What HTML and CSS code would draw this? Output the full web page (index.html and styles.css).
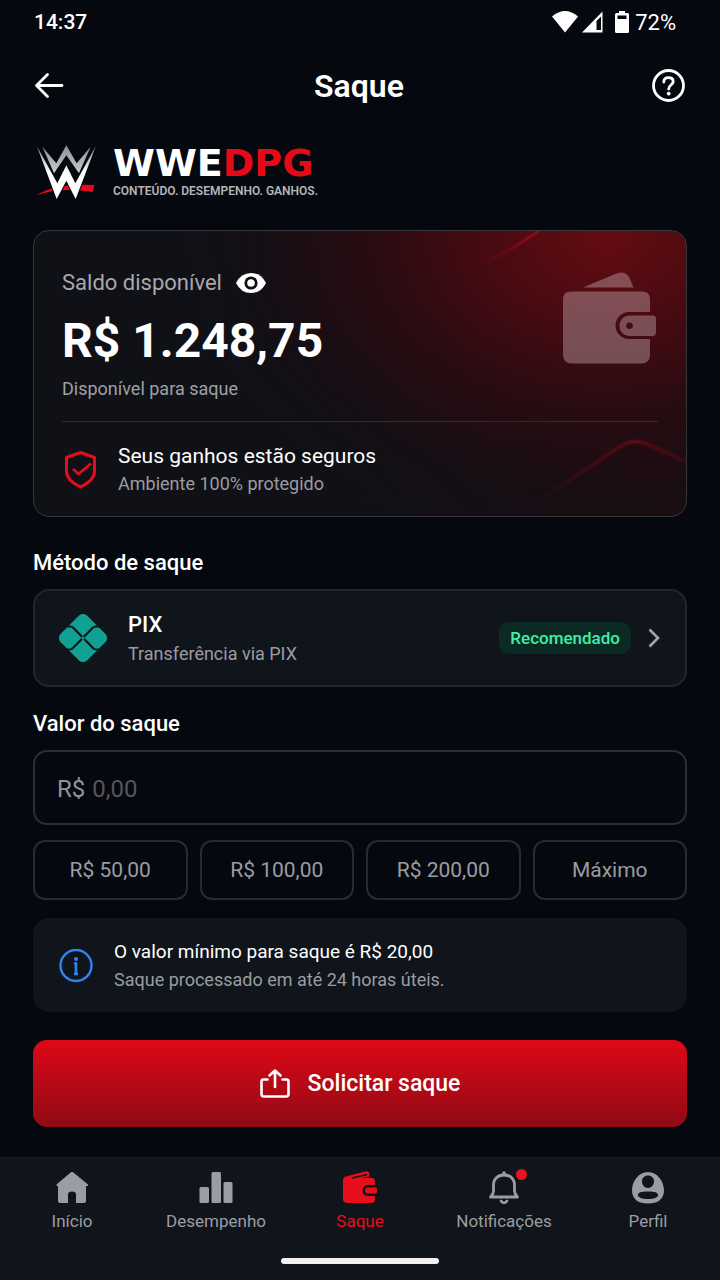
FILE: index.html
```html
<!DOCTYPE html>
<html lang="pt-BR">
<head>
    <meta charset="UTF-8" />
    <meta name="viewport" content="width=device-width, initial-scale=1.0" />
    <title>Saque - WWEDPG</title>
    <link rel="stylesheet" href="styles.css">
</head>
<body>
    <div class="status-bar">
        <span>14:37</span>
        <div class="status-icons">
            <svg width="26" height="22" viewBox="0 0 26 22" fill="#fff"><path d="M0 5.500Q13-5.500 26 5.500L13 21.500Z"/></svg>
            <svg width="21" height="22" viewBox="0 0 21 22"><path d="M20.500 0.500V21.500H0Z" fill="#fff"/><path d="M14.500 10L19 5.500V19H14.500Z" fill="#05080e"/></svg>
            <svg class="battery" width="14" height="22" viewBox="0 0 14 22"><path d="M4 0h6v2h2.500q1.500 0 1.500 1.500v17q0 1.500-1.500 1.500h-11Q0 22 0 20.500v-17Q0 2 1.500 2H4Z" fill="#fff"/><path d="M2.500 4.500h9V8h-9Z" fill="#05080e"/></svg>
            <span class="battery-level">72%</span>
        </div>
    </div>

    <header class="header">
        <button class="icon-btn" type="button" aria-label="Voltar">
            <svg width="32" height="32" viewBox="0 0 32 32" fill="none" stroke="#fff" stroke-width="2.800" stroke-linecap="round" stroke-linejoin="round"><path d="M28 15.500H3M13.500 4.500L2.500 15.500L13.500 26.500"/></svg>
        </button>
        <h1>Saque</h1>
        <button class="icon-btn" type="button" aria-label="Ajuda">
            <svg width="34" height="34" viewBox="0 0 34 34" fill="none" stroke="#fff" stroke-width="2.800"><circle cx="16.500" cy="16.500" r="15"/><path d="M11.800 13Q11.800 8.700 16.500 8.700T21.200 12.700C21.200 15.700 16.700 15.900 16.700 20" stroke-linecap="round"/><circle cx="16.700" cy="24.600" r="1.900" fill="#fff" stroke="none"/></svg>
        </button>
    </header>

    <main class="content">
        <div class="brand">
            <svg width="60" height="54" viewBox="36 45 180 162">
                <defs>
                    <linearGradient id="steel" x1="0" y1="0" x2="0" y2="1">
                        <stop offset="0" stop-color="#8d8f94"/>
                        <stop offset="1" stop-color="#c9cacd"/>
                    </linearGradient>
                    <linearGradient id="silver" x1="0" y1="0" x2="0" y2="1">
                        <stop offset="0" stop-color="#85878c"/>
                        <stop offset="0.5" stop-color="#fff"/>
                    </linearGradient>
                </defs>
                <path d="M38 196Q90 160 211 165L206 186Q110 170 38 196Z" fill="#e30b1b"/>
                <path d="M55 50L97 100L127 46L158 100L200 50L165 130L127 76L90 130Z" fill="url(#steel)"/>
                <path class="brand-w" d="M38 47L100 160L127 106L154 160L216 47L155 207L127 152L98 207Z" fill="url(#silver)"/>
            </svg>
            <div>
                <div class="brand-name">WWE<span>DPG</span></div>
                <div class="brand-tagline">CONTEÚDO. DESEMPENHO. GANHOS.</div>
            </div>
        </div>

        <section class="balance-card">
            <svg class="card-lines" width="327" height="287" viewBox="0 0 327 287" fill="none">
                <defs>
                    <linearGradient id="lineTop" x1="0" y1="1" x2="1" y2="0">
                        <stop offset="0" stop-color="#e3101f" stop-opacity="0"/>
                        <stop offset="1" stop-color="#e3101f" stop-opacity="0.75"/>
                    </linearGradient>
                    <linearGradient id="lineBottom" x1="0" y1="0" x2="1" y2="0">
                        <stop offset="0" stop-color="#c4101c" stop-opacity="0"/>
                        <stop offset="0.650" stop-color="#c4101c" stop-opacity="0.450"/>
                        <stop offset="1" stop-color="#c4101c" stop-opacity="0.200"/>
                    </linearGradient>
                    <filter id="soft"><feGaussianBlur stdDeviation="1"/></filter>
                </defs>
                <path d="M114 36Q145 25 182-2" stroke="url(#lineTop)" stroke-width="2" filter="url(#soft)"/>
                <path d="M170 276L260 216Q273 207 288 213L330 232" stroke="url(#lineBottom)" stroke-width="3" filter="url(#soft)"/>
            </svg>
            <div class="balance">
                <div>
                    <div class="balance-label">
                        <span>Saldo disponível</span>
                        <button class="icon-btn" type="button" aria-label="Ocultar saldo">
                            <svg width="30" height="20" viewBox="0 0 30 20"><path d="M0 10Q5 0 15 0T30 10Q25 20 15 20T0 10Z" fill="#fff"/><circle cx="15" cy="10" r="5.200" fill="#fff" stroke="#120f14" stroke-width="2.800"/></svg>
                        </button>
                    </div>
                    <div class="balance-value">R$ 1.248,75</div>
                    <div class="balance-note">Disponível para saque</div>
                </div>
                <svg class="wallet" width="94" height="92" viewBox="0 0 94 92">
                    <path d="M20 15.500L54 1.200Q62-1.500 66 5L70.500 15.500Z"/>
                    <path d="M8 19.500H79Q87 19.500 87 27.500V40H66A13.500 13.500 0 0 0 66 67H87V83Q87 91.500 78 91.500H9Q0 91.500 0 82.500V27.500Q0 19.500 8 19.500Z"/>
                    <path fill-rule="evenodd" d="M66 43.500H90Q93 43.500 93 47V60Q93 64 89.500 64H66A9.500 10.200 0 0 1 66 43.500ZM66.500 50.500A3.300 3.300 0 1 0 66.500 57.100A3.300 3.300 0 1 0 66.500 50.500Z"/>
                </svg>
            </div>
            <div class="secure">
                <svg width="36" height="38" viewBox="0 0 36 38" fill="none" stroke="#e50d1c" stroke-width="3" stroke-linejoin="round"><path d="M18.500 1.500L32.500 6.500V20Q32.500 29.500 18.500 36Q4.500 29.500 4.500 20V6.500Z"/><path d="M11 18L16.500 23L29 12.500" stroke-width="2.600"/></svg>
                <div>
                    <div class="row-title secure-title">Seus ganhos estão seguros</div>
                    <div class="row-text">Ambiente 100% protegido</div>
                </div>
            </div>
        </section>

        <h2>Método de saque</h2>
        <button class="method" type="button">
            <svg width="48" height="48" viewBox="0 0 48 48">
                <rect x="5.250" y="5.250" width="37.500" height="37.500" rx="6" transform="rotate(45 24 24)" fill="#10a193"/>
                <path d="M8 12.500H11.500Q13 12.500 14.500 14L34 34Q35.500 35.500 37 35.500H40M40 12.500H36.500Q35 12.500 33.500 14L14 34Q12.500 35.500 11 35.500H8" fill="none" stroke="#10141b" stroke-width="2.200"/>
                <circle cx="24" cy="24" r="1.500" fill="#10a193"/>
            </svg>
            <span class="method-text">
                <span class="row-title">PIX</span>
                <span class="row-text">Transferência via PIX</span>
            </span>
            <span class="tag">Recomendado</span>
            <svg width="12" height="20" viewBox="0 0 12 20" fill="none" stroke="#a2a4aa" stroke-width="2.600"><path d="M1.500 1.500L10 10L1.500 18.500"/></svg>
        </button>

        <h2><label for="amount">Valor do saque</label></h2>
        <div class="amount-field">
            <span>R$</span>
            <input id="amount" type="text" inputmode="decimal" placeholder="0,00">
        </div>
        <div class="presets">
            <button type="button">R$ 50,00</button>
            <button type="button">R$ 100,00</button>
            <button type="button">R$ 200,00</button>
            <button type="button">Máximo</button>
        </div>

        <div class="info">
            <svg width="34" height="34" viewBox="0 0 34 34" fill="none" stroke="#2f83f3"><circle cx="17" cy="16.500" r="15.500" stroke-width="2.400"/><path d="M15 14.500H17V24.500M15 25H19" stroke-width="2.600"/><circle cx="17" cy="10" r="2" fill="#2f83f3" stroke="none"/></svg>
            <div>
                <div class="info-title">O valor mínimo para saque é R$ 20,00</div>
                <div class="row-text">Saque processado em até 24 horas úteis.</div>
            </div>
        </div>

        <button class="submit" type="button">
            <svg width="30" height="30" viewBox="0 0 30 30" fill="none" stroke="#fff" stroke-width="2.600" stroke-linecap="round" stroke-linejoin="round"><path d="M7.500 10.500H3.500Q1.500 10.500 1.500 12.500V25Q1.500 27.500 4 27.500H26Q28.500 27.500 28.500 25V12.500Q28.500 10.500 26.500 10.500H22.500M15 18V2M9.500 6.500L15 1.500L20.500 6.500"/></svg>
            Solicitar saque
        </button>
    </main>

    <nav class="bottom-nav">
        <div class="nav-items">
            <a href="#">
                <svg width="34" height="34" viewBox="0 0 34 34" fill="currentColor"><path d="M17 1Q18 1 19 2L33 13.500V15H31V30Q31 32 29 32H21V23.500Q21 20.500 17 20.500T13 23.500V32H5Q3 32 3 30V15H1.500V13.500L15 2Q16 1 17 1Z"/></svg>
                Início
            </a>
            <a href="#">
                <svg width="34" height="34" viewBox="0 0 34 34" fill="currentColor"><rect x="0.500" y="16" width="9.500" height="16" rx="1.500"/><rect x="12.500" y="1" width="9.500" height="31" rx="1.500"/><rect x="24.500" y="11" width="9" height="21" rx="1.500"/></svg>
                Desempenho
            </a>
            <a class="active" href="#" aria-current="page">
                <svg width="34" height="34" viewBox="0 0 34 34" fill="currentColor"><path d="M3 5.500L22 0.500Q25-0.500 26.500 2.500L26 5.500L18 7H28.500Q32 7 32 10.500V14H25A5.500 5.500 0 0 0 25 25H32V29Q32 32 28 32H4.500Q0 32 0 28V9Q0 6.500 3 5.500Z"/><path d="M25 16.500H33Q34 16.500 34 18V21Q34 22.500 32.500 22.500H25A3 3 0 0 1 25 16.500Z"/><path d="M9 7L24 3.500" stroke="#10141b" stroke-width="1.600"/></svg>
                Saque
            </a>
            <a href="#">
                <span class="bell">
                    <svg width="34" height="34" viewBox="0 0 34 34" fill="none" stroke="currentColor" stroke-width="2.800" stroke-linecap="round" stroke-linejoin="round"><path d="M17 4C10 4 6.500 8.500 6.500 14V20Q6.500 23 3.500 26H30.500Q27.500 23 27.500 20V14C27.500 8.500 24 4 17 4Z"/><path d="M17 2V3.500" stroke-width="3.500"/><path d="M14 30Q17 33.800 20 30"/></svg>
                    <span class="dot"></span>
                </span>
                Notificações
            </a>
            <a href="#">
                <svg width="34" height="34" viewBox="0 0 34 34" fill="currentColor"><path fill-rule="evenodd" d="M17 1C26 1 33 10 33 19.500C33 28 27 32.500 17 32.500S1 28 1 19.500C1 10 8 1 17 1ZM17 4.500C13.500 4.500 11 7 11 10.500S13.500 17 17 17S23 14 23 10.500S20.500 4.500 17 4.500ZM17 20.500C10 20.500 7 21.500 7 24S11 28 17 28S27 26.500 27 24S24 20.500 17 20.500Z"/></svg>
                Perfil
            </a>
        </div>
        <div class="home-indicator"></div>
    </nav>
</body>
</html>
```
FILE: styles.css
```css
* {
    box-sizing: border-box;
}

body {
    font-family: Roboto, sans-serif;
    background: #05080e;
    color: #fff;
    margin: 0;
    min-height: 100vh;
    display: flex;
    flex-direction: column;
}

button {
    font: inherit;
    color: inherit;
    cursor: pointer;
}

svg {
    display: block;
    flex-shrink: 0;
}

h1, h2 {
    margin: 0;
}

/* Status bar and header */
.status-bar {
    display: flex;
    justify-content: space-between;
    align-items: center;
    height: 44px;
    padding: 0 44px 0 34px;
    font-size: 21px;
    font-weight: 500;
}

.status-icons {
    display: flex;
    align-items: center;
    gap: 4px;
}

.battery {
    margin: 0 2px 0 8px;
}

.battery-level {
    font-size: 22px;
    font-weight: 400;
}

.header {
    display: flex;
    justify-content: space-between;
    align-items: center;
    height: 84px;
    padding: 0 34px;
}

.header h1 {
    font-size: 32px;
    font-weight: 600;
    line-height: 40px;
}

.icon-btn {
    background: none;
    border: none;
    padding: 0;
}

.content {
    flex: 1;
    padding: 16px 33px 30px;
}

/* Brand */
.brand {
    display: flex;
    align-items: center;
    gap: 17px;
    height: 56px;
    padding-left: 3px;
    margin-bottom: 30px;
}

.brand-w {
    stroke: #05080e;
    stroke-width: 6px;
    paint-order: stroke;
}

.brand-name {
    font-family: "DejaVu Sans", sans-serif;
    font-size: 38px;
    font-weight: 700;
    line-height: 38px;
}

.brand-name span {
    color: #e60a19;
}

.brand-tagline {
    color: #b4b6ba;
    font-size: 12px;
    font-weight: 600;
    line-height: 18px;
}

/* Balance */
.balance-card {
    position: relative;
    overflow: hidden;
    padding: 38px 28px 18px;
    border: 1px solid #36363b;
    border-radius: 16px;
    background: radial-gradient(ellipse 440px 320px at 88% 2%, #650b12 0%, #460b11 28%, #270c11 55%, rgba(24, 13, 18, 0.5) 80%, rgba(15, 16, 22, 0) 100%), linear-gradient(90deg, #0f1117 50%, #1b0d13);
}

.card-lines {
    position: absolute;
    top: 0;
    right: 0;
}

.balance {
    position: relative;
    display: flex;
    justify-content: space-between;
    padding-bottom: 20px;
    border-bottom: 1px solid #322b2e;
}

.balance-label {
    display: flex;
    align-items: center;
    gap: 14px;
    color: #a9a8ac;
    font-size: 22px;
    line-height: 28px;
}

.balance-value {
    margin: 16px 0 8px;
    font-size: 48px;
    font-weight: 700;
    line-height: 56px;
}

.balance-note {
    color: #a0a0a5;
    font-size: 18px;
    line-height: 24px;
}

.wallet {
    margin: 3px 1px 0 0;
    fill: rgba(205, 180, 185, 0.4);
}

.secure {
    position: relative;
    display: flex;
    align-items: center;
    gap: 20px;
    padding-top: 20px;
}

.row-title {
    font-size: 22px;
    font-weight: 500;
    line-height: 28px;
}

.secure-title {
    font-size: 21px;
    font-weight: 400;
}

.row-text {
    color: #9b9ca2;
    font-size: 18px;
    line-height: 28px;
}

h2 {
    margin: 32px 0 12px;
    font-size: 22px;
    font-weight: 500;
    line-height: 28px;
}

/* Withdrawal method */
.method {
    display: flex;
    align-items: center;
    width: 100%;
    height: 98px;
    padding: 0 25px 0 24px;
    border: 2px solid #22262d;
    border-radius: 16px;
    background: #10141b;
    text-align: left;
}

.method-text {
    display: flex;
    flex-direction: column;
    flex: 1;
    gap: 1px;
    padding: 3px 0 0 21px;
}

.tag {
    padding: 0 11px;
    margin-right: 17px;
    border-radius: 10px;
    background: #0b2a24;
    color: #3df0a8;
    font-size: 17px;
    font-weight: 500;
    line-height: 32px;
}

.method + h2 {
    margin-top: 23px;
}

/* Amount */
.amount-field {
    display: flex;
    align-items: center;
    gap: 7px;
    height: 75px;
    padding: 2px 22px 0;
    border: 2px solid #2b2e34;
    border-radius: 14px;
    color: #929399;
    font-size: 24px;
}

.amount-field input {
    flex: 1;
    min-width: 0;
    padding: 0;
    border: none;
    outline: none;
    background: none;
    color: #fff;
    font: inherit;
}

.amount-field input::placeholder {
    color: #55565b;
    opacity: 1;
}

.presets {
    display: grid;
    grid-template-columns: repeat(4, 1fr);
    gap: 12px;
    margin: 15px 0 18px;
}

.presets button {
    height: 60px;
    padding: 0;
    border: 2px solid #282b31;
    border-radius: 12px;
    background: none;
    color: #9b9ca2;
    font-size: 21px;
}

.info {
    display: flex;
    align-items: center;
    gap: 21px;
    padding: 20px 26px 18px;
    border-radius: 16px;
    background: #10141b;
}

.info-title {
    font-size: 19px;
    line-height: 28px;
}

.submit {
    display: flex;
    align-items: center;
    justify-content: center;
    gap: 18px;
    width: 100%;
    height: 87px;
    margin-top: 28px;
    border: none;
    border-radius: 14px;
    background: linear-gradient(#df0818, #8f0a14);
    font-size: 23px;
    font-weight: 500;
}

/* Bottom navigation */
.bottom-nav {
    padding: 13px 0 16px;
    border-top: 1px solid #171b22;
    background: #10141b;
}

.nav-items {
    display: grid;
    grid-template-columns: repeat(5, 1fr);
}

.nav-items a {
    display: flex;
    flex-direction: column;
    align-items: center;
    gap: 4px;
    color: #9c9da2;
    font-size: 17px;
    line-height: 24px;
    text-decoration: none;
}

.nav-items .active {
    color: #e90e1c;
}

.bell {
    position: relative;
}

.dot {
    position: absolute;
    top: -2px;
    right: -6px;
    width: 11px;
    height: 11px;
    border-radius: 50%;
    background: #e8131f;
}

.home-indicator {
    width: 158px;
    height: 6px;
    margin: 25px auto 0;
    border-radius: 3px;
    background: #f0f0f0;
}
```
